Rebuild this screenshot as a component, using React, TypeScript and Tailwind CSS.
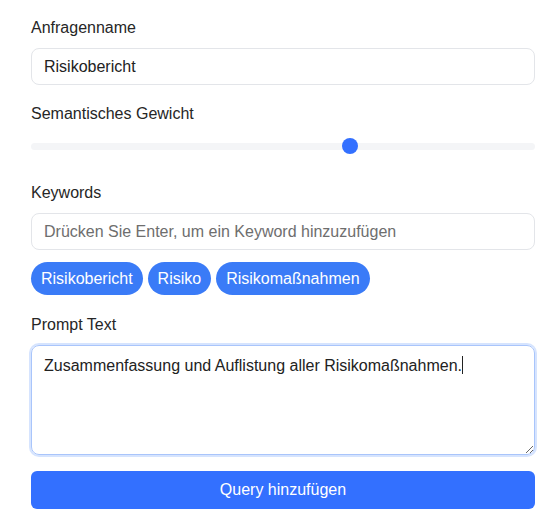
import React, { useState } from 'react';

const keywords = ['Risikobericht', 'Risiko', 'Risikomaßnahmen'];

const QueryForm = () => {
  const [name, setName] = useState('Risikobericht');
  const [keyword, setKeyword] = useState('');
  const weight = 0.633;

  return (
    <div className="min-h-[529px] bg-white pl-[31px] pr-[25px] pt-4 text-[#262626] font-['Liberation_Sans',Arial,sans-serif]">
      <label className="block text-base leading-6 mb-2">Anfragenname</label>
      <input
        value={name}
        onChange={(e) => setName(e.target.value)}
        className="block w-full h-[37px] px-3 rounded-lg border border-[#e3e5e9] text-base text-[#222] outline-none"
      />

      <label className="block text-base leading-6 mt-[17px]">Semantisches Gewicht</label>
      <div className="relative mt-3 h-4 flex items-center">
        <div className="w-full h-[7px] rounded-full bg-[#f4f5f7]" />
        <div
          className="absolute top-0 w-4 h-4 rounded-full bg-[#3370ff]"
          style={{ left: `calc(${weight * 100}% - 8px)` }}
        />
      </div>

      <label className="block text-base leading-6 mt-[27px] mb-2">Keywords</label>
      <input
        value={keyword}
        onChange={(e) => setKeyword(e.target.value)}
        placeholder="Drücken Sie Enter, um ein Keyword hinzuzufügen"
        className="block w-full h-[37px] px-3 rounded-lg border border-[#e3e5e9] text-base text-[#222] placeholder:text-[#6e6e6e] outline-none"
      />
      <div className="flex flex-wrap gap-[5px] mt-3">
        {keywords.map((k) => (
          <span
            key={k}
            className="h-[33px] px-[10px] flex items-center rounded-full bg-[#3a7bf7] text-white text-base"
          >
            {k}
          </span>
        ))}
      </div>

      <label className="block text-base leading-6 mt-[18px] mb-2">Prompt Text</label>
      <div className="h-[110px] px-3 py-2 rounded-lg border border-[#a9c5fb] ring-2 ring-[#d6e4fe] resize-y overflow-auto text-base leading-6 text-[#222]">
        Zusammenfassung und Auflistung aller Risikomaßnahmen.
        <span className="inline-block w-px h-[18px] bg-[#222] align-[-3px]" />
      </div>

      <button className="mt-4 w-full h-[38px] rounded-md bg-[#3370ff] text-white text-base">
        Query hinzufügen
      </button>
    </div>
  );
};

export default function App() {
  return <QueryForm />;
}
